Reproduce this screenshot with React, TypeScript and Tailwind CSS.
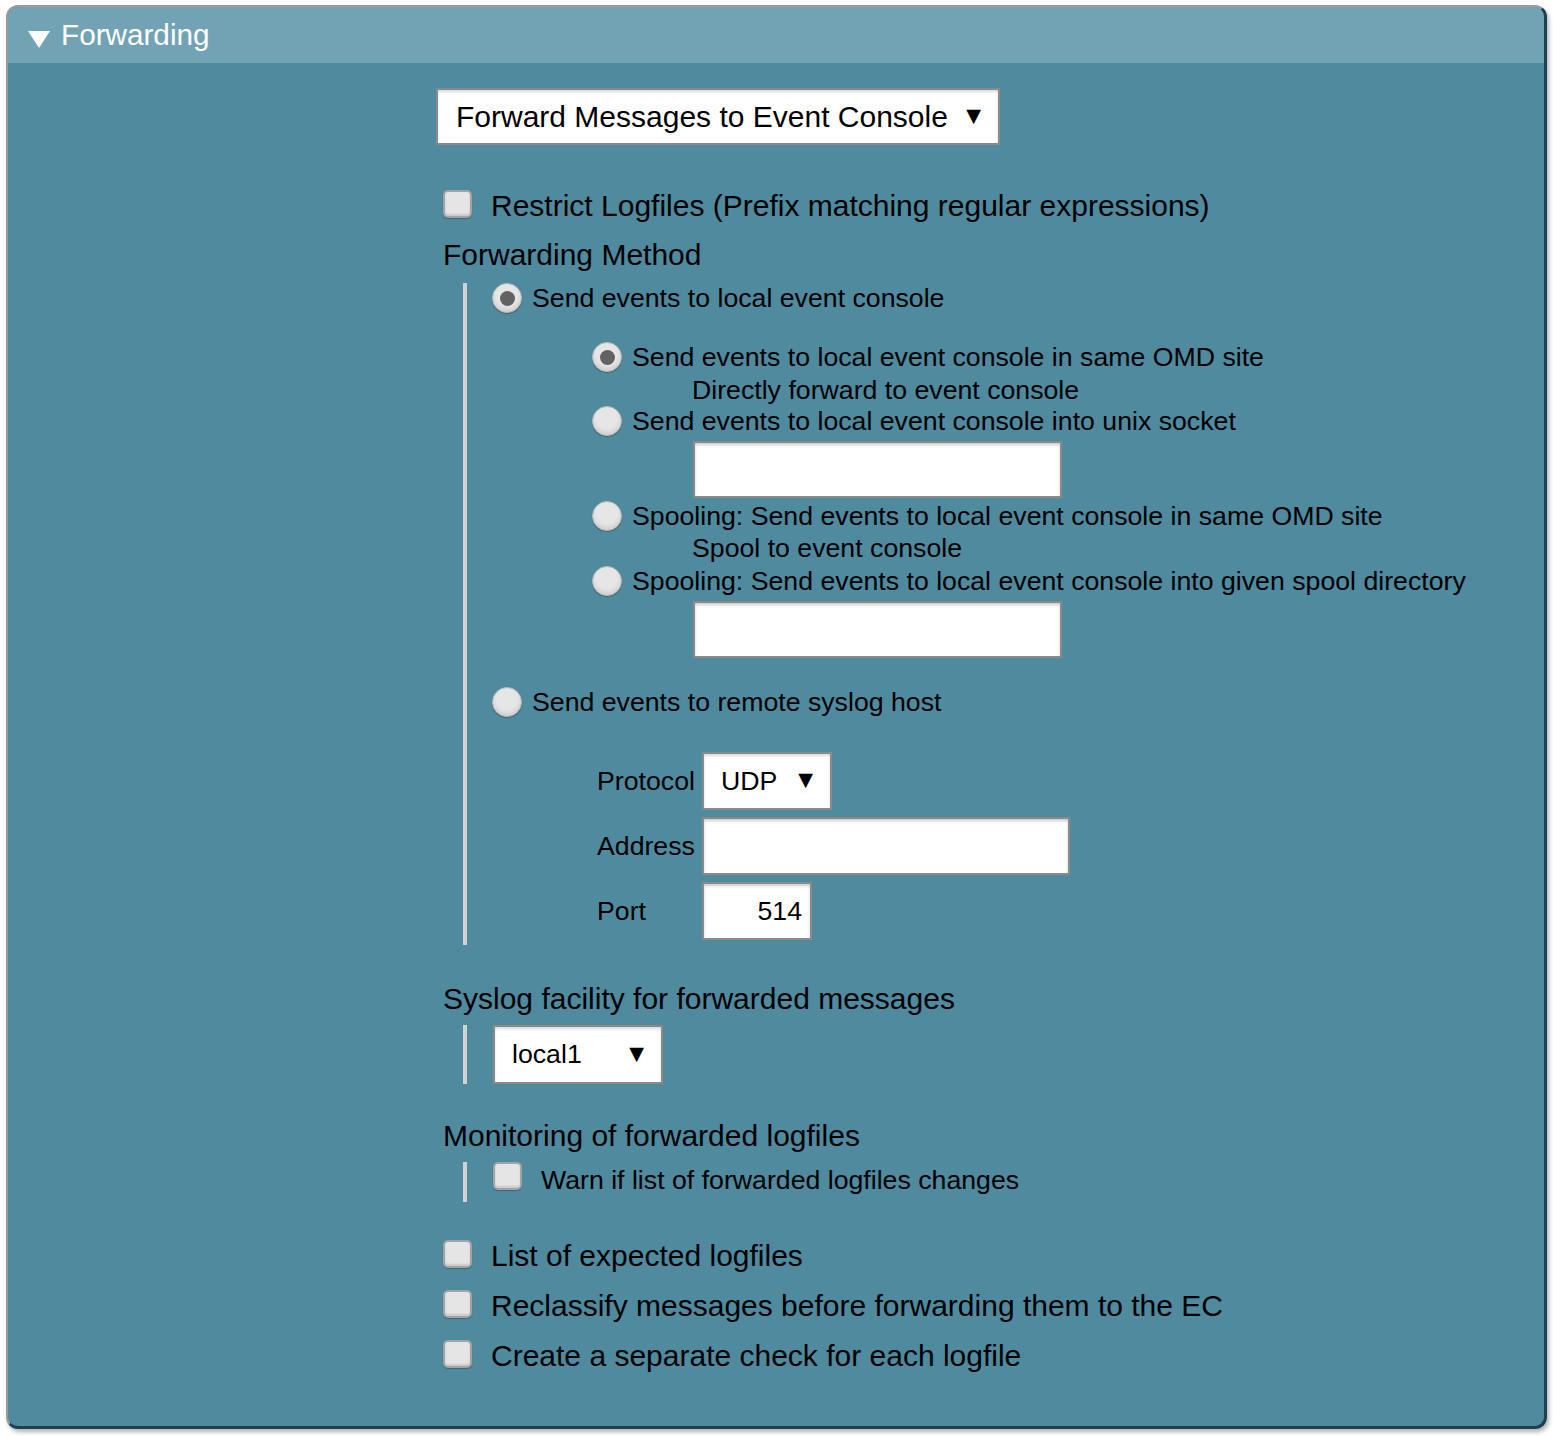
import React from "react";

const font = { fontFamily: '"Liberation Sans", Arial, sans-serif' };

function Checkbox() {
  return (
    <span className="inline-block w-[29px] h-[28px] shrink-0 rounded-[5px] border-2 border-[#a3a3a3] bg-[#e5e5e5] shadow-[inset_0_-2px_2px_rgba(0,0,0,0.12),0_1px_1px_rgba(0,0,0,0.25)]" />
  );
}

function Radio({ checked = false }: { checked?: boolean }) {
  return (
    <span className="flex w-[30px] h-[30px] shrink-0 items-center justify-center rounded-full border border-[#b5b5b5] bg-[#e6e6e6] shadow-[inset_0_-3px_4px_rgba(0,0,0,0.1),0_1px_1px_rgba(0,0,0,0.25)]">
      {checked && <span className="block w-[15px] h-[15px] rounded-full bg-[#626262]" />}
    </span>
  );
}

function Select({ value, className }: { value: string; className: string }) {
  return (
    <div
      className={
        "flex items-center justify-between bg-white border-2 border-[#8a8a8a] shadow-[inset_0_2px_3px_rgba(0,0,0,0.15)] text-black " +
        className
      }
    >
      <span>{value}</span>
      <span className="text-[25px] leading-none -mt-[3px]">▼</span>
    </div>
  );
}

function TextInput({ className, value }: { className: string; value?: string }) {
  return (
    <div
      className={
        "flex items-center justify-end bg-white border-2 border-[#8a8a8a] shadow-[inset_0_2px_3px_rgba(0,0,0,0.2)] text-black text-[26.7px] " +
        className
      }
    >
      {value}
    </div>
  );
}

export default function App() {
  return (
    <div className="w-[1553px] h-[1436px] bg-white pt-[5px] pl-[6px]" style={font}>
      <div className="w-[1541px] h-[1424px] rounded-[12px] overflow-hidden border-l-2 border-t-2 border-[#9a9a9a] border-r-[3px] border-b-[3px] border-r-[#1e4152] border-b-[#1e4152] bg-[#4f8a9f] shadow-[2px_3px_4px_rgba(0,0,0,0.3)]">
        <div className="h-[56px] bg-[#72a3b5] flex items-center pl-[20px]">
          <span className="inline-block w-0 h-0 border-l-[11px] border-r-[11px] border-t-[17px] border-l-transparent border-r-transparent border-t-white mt-[8px]" />
          <span className="ml-[11px] text-white text-[29.7px] leading-none">Forwarding</span>
        </div>

        <div className="pl-[428px] pt-[25px] text-black">
          <Select
            value="Forward Messages to Event Console"
            className="w-[564px] h-[57px] pl-[18px] pr-[12px] text-[30px]"
          />

          <div className="mt-[45px] ml-[7px] flex items-center h-[28px]">
            <Checkbox />
            <span className="ml-[19px] text-[30px] leading-none mt-[3px]">
              Restrict Logfiles (Prefix matching regular expressions)
            </span>
          </div>

          <div className="mt-[20px] ml-[7px] text-[30px] leading-[34px]">Forwarding Method</div>

          <div className="mt-[11px] ml-[27px] h-[662px] border-l-[4px] border-[#d2d2d2] pl-[25px] text-[26.7px]">
            <div className="flex items-center h-[30px]">
              <Radio checked />
              <span className="ml-[10px] leading-none">Send events to local event console</span>
            </div>

            <div className="pl-[100px]">
              <div className="mt-[29px] flex items-center h-[30px]">
                <Radio checked />
                <span className="ml-[10px] leading-none">Send events to local event console in same OMD site</span>
              </div>
              <div className="mt-[3px] pl-[100px] leading-[30px]">Directly forward to event console</div>
              <div className="mt-[1px] flex items-center h-[30px]">
                <Radio />
                <span className="ml-[10px] leading-none">Send events to local event console into unix socket</span>
              </div>
              <TextInput className="mt-[5px] ml-[101px] w-[369px] h-[57px]" />
              <div className="mt-[3px] flex items-center h-[30px]">
                <Radio />
                <span className="ml-[10px] leading-none">
                  Spooling: Send events to local event console in same OMD site
                </span>
              </div>
              <div className="mt-[2px] pl-[100px] leading-[30px]">Spool to event console</div>
              <div className="mt-[3px] flex items-center h-[30px]">
                <Radio />
                <span className="ml-[10px] leading-none">
                  Spooling: Send events to local event console into given spool directory
                </span>
              </div>
              <TextInput className="mt-[5px] ml-[101px] w-[369px] h-[57px]" />
            </div>

            <div className="mt-[29px] flex items-center h-[30px]">
              <Radio />
              <span className="ml-[10px] leading-none">Send events to remote syslog host</span>
            </div>

            <div className="pl-[105px] mt-[35px] flex flex-col gap-[7px]">
              <div className="flex items-center">
                <span className="w-[105px]">Protocol</span>
                <Select value="UDP" className="w-[130px] h-[58px] pl-[17px] pr-[12px] text-[26.7px]" />
              </div>
              <div className="flex items-center">
                <span className="w-[105px]">Address</span>
                <TextInput className="w-[368px] h-[58px]" />
              </div>
              <div className="flex items-center">
                <span className="w-[105px]">Port</span>
                <TextInput className="w-[110px] h-[58px] pr-[8px]" value="514" />
              </div>
            </div>
          </div>

          <div className="mt-[37px] ml-[7px] text-[30px] leading-[34px]">Syslog facility for forwarded messages</div>

          <div className="mt-[9px] ml-[27px] h-[59px] border-l-[4px] border-[#d2d2d2] pl-[26px]">
            <Select value="local1" className="w-[170px] h-[59px] pl-[17px] pr-[12px] text-[26.7px]" />
          </div>

          <div className="mt-[35px] ml-[7px] text-[30px] leading-[34px]">Monitoring of forwarded logfiles</div>

          <div className="mt-[9px] ml-[27px] h-[40px] border-l-[4px] border-[#d2d2d2] pl-[26px] flex items-start">
            <Checkbox />
            <span className="ml-[19px] text-[26.7px] leading-[36px]">Warn if list of forwarded logfiles changes</span>
          </div>

          <div className="mt-[37px] ml-[7px] flex flex-col gap-[20px] text-[30px]">
            <div className="flex items-center h-[30px]">
              <Checkbox />
              <span className="ml-[19px] leading-none mt-[3px]">List of expected logfiles</span>
            </div>
            <div className="flex items-center h-[30px]">
              <Checkbox />
              <span className="ml-[19px] leading-none mt-[3px]">Reclassify messages before forwarding them to the EC</span>
            </div>
            <div className="flex items-center h-[30px]">
              <Checkbox />
              <span className="ml-[19px] leading-none mt-[3px]">Create a separate check for each logfile</span>
            </div>
          </div>
        </div>
      </div>
    </div>
  );
}
